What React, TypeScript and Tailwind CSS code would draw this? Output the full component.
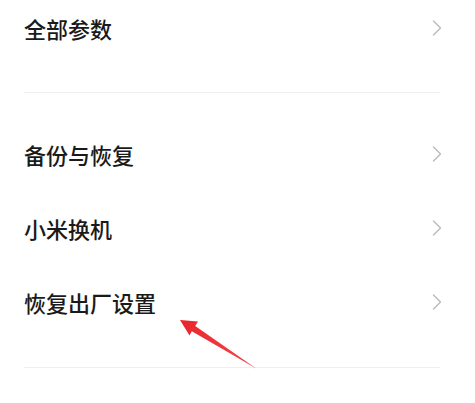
import React from "react";

const font = { fontFamily: '"Noto Sans CJK SC", "Noto Sans", sans-serif' };

function Chevron() {
  return (
    <svg width="10" height="16" viewBox="0 0 10 16" fill="none">
      <path d="M1.5 1 L8.5 8 L1.5 15" stroke="#b8b8b8" strokeWidth="1.3" strokeLinejoin="round" strokeLinecap="round" />
    </svg>
  );
}

function Row({ label }: { label: string }) {
  return (
    <div className="flex h-[74px] items-center justify-between">
      <span className="text-[22px] font-medium leading-none text-[#1a1a1a]">{label}</span>
      <span className="mr-[-2px]">
        <Chevron />
      </span>
    </div>
  );
}

export default function App() {
  return (
    <div className="relative h-[403px] w-[475px] overflow-hidden bg-white" style={font}>
      <div className="-mt-[9px] pl-[24px] pr-[35px]">
        <Row label="全部参数" />
        <div className="mt-[27px] h-px bg-[#eeeeee]" />
        <div className="mt-[24px]">
          <Row label="备份与恢复" />
          <Row label="小米换机" />
          <Row label="恢复出厂设置" />
        </div>
        <div className="mt-[28px] h-px bg-[#eeeeee]" />
      </div>

      {/* red annotation arrow */}
      <svg className="pointer-events-none absolute inset-0" width="475" height="403" viewBox="0 0 475 403">
        <defs>
          <linearGradient id="arr" x1="180" y1="320" x2="257" y2="369" gradientUnits="userSpaceOnUse">
            <stop offset="0" stopColor="#e8262c" />
            <stop offset="1" stopColor="#f0494c" />
          </linearGradient>
        </defs>
        <polygon
          points="180,320 198,321.5 195.2,326 257,369 191.8,331.2 189.5,335.5"
          fill="url(#arr)"
        />
      </svg>
    </div>
  );
}
